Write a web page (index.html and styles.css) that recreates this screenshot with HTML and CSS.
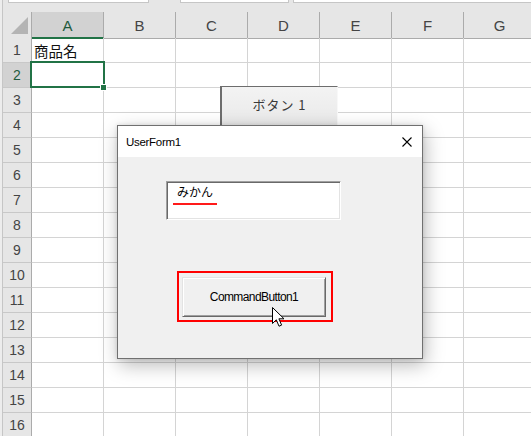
FILE: index.html
```html
<!DOCTYPE html>
<html lang="ja">
<head>
<meta charset="utf-8">
<title>Excel UserForm</title>
<link rel="stylesheet" href="styles.css">
</head>
<body>
<div class="page">
  <div class="strip"></div>
  <div class="content">
    <div class="top">
      <div class="fbar">
        <div class="fbox fbox1"></div>
        <div class="fbox fbox2"></div>
        <div class="fbox fbox3"></div>
      </div>
    </div>
    <div class="sheet">
      <div class="row hdr">
        <div class="corner"><svg width="29" height="26" viewBox="0 0 29 26"><polygon points="8,22 25,5 25,22" fill="#b4b4b4"/></svg></div>
        <div class="ch sel">A</div><div class="ch">B</div><div class="ch">C</div><div class="ch">D</div><div class="ch">E</div><div class="ch">F</div><div class="ch">G</div>
      </div>
      <div class="row"><div class="rh">1</div><div class="c"><span class="val">商品名</span></div><div class="c"></div><div class="c"></div><div class="c"></div><div class="c"></div><div class="c"></div><div class="c"></div></div>
      <div class="row"><div class="rh sel">2</div><div class="c"></div><div class="c"></div><div class="c"></div><div class="c"></div><div class="c"></div><div class="c"></div><div class="c"></div></div>
      <div class="row"><div class="rh">3</div><div class="c"></div><div class="c"></div><div class="c"></div><div class="c"></div><div class="c"></div><div class="c"></div><div class="c"></div></div>
      <div class="row"><div class="rh">4</div><div class="c"></div><div class="c"></div><div class="c"></div><div class="c"></div><div class="c"></div><div class="c"></div><div class="c"></div></div>
      <div class="row"><div class="rh">5</div><div class="c"></div><div class="c"></div><div class="c"></div><div class="c"></div><div class="c"></div><div class="c"></div><div class="c"></div></div>
      <div class="row"><div class="rh">6</div><div class="c"></div><div class="c"></div><div class="c"></div><div class="c"></div><div class="c"></div><div class="c"></div><div class="c"></div></div>
      <div class="row"><div class="rh">7</div><div class="c"></div><div class="c"></div><div class="c"></div><div class="c"></div><div class="c"></div><div class="c"></div><div class="c"></div></div>
      <div class="row"><div class="rh">8</div><div class="c"></div><div class="c"></div><div class="c"></div><div class="c"></div><div class="c"></div><div class="c"></div><div class="c"></div></div>
      <div class="row"><div class="rh">9</div><div class="c"></div><div class="c"></div><div class="c"></div><div class="c"></div><div class="c"></div><div class="c"></div><div class="c"></div></div>
      <div class="row"><div class="rh">10</div><div class="c"></div><div class="c"></div><div class="c"></div><div class="c"></div><div class="c"></div><div class="c"></div><div class="c"></div></div>
      <div class="row"><div class="rh">11</div><div class="c"></div><div class="c"></div><div class="c"></div><div class="c"></div><div class="c"></div><div class="c"></div><div class="c"></div></div>
      <div class="row"><div class="rh">12</div><div class="c"></div><div class="c"></div><div class="c"></div><div class="c"></div><div class="c"></div><div class="c"></div><div class="c"></div></div>
      <div class="row"><div class="rh">13</div><div class="c"></div><div class="c"></div><div class="c"></div><div class="c"></div><div class="c"></div><div class="c"></div><div class="c"></div></div>
      <div class="row"><div class="rh">14</div><div class="c"></div><div class="c"></div><div class="c"></div><div class="c"></div><div class="c"></div><div class="c"></div><div class="c"></div></div>
      <div class="row"><div class="rh">15</div><div class="c"></div><div class="c"></div><div class="c"></div><div class="c"></div><div class="c"></div><div class="c"></div><div class="c"></div></div>
      <div class="row"><div class="rh">16</div><div class="c"></div><div class="c"></div><div class="c"></div><div class="c"></div><div class="c"></div><div class="c"></div><div class="c"></div></div>
    </div>
  </div>
</div>

<div class="selection"><div class="handle"></div></div>

<div class="xlbutton">ボタン 1</div>

<div class="userform">
  <div class="titlebar">
    <span class="title">UserForm1</span>
    <svg class="close" width="10" height="10" viewBox="0 0 10 10"><path d="M0.5 0.5 L9.5 9.5 M9.5 0.5 L0.5 9.5" stroke="#000" stroke-width="1.1" fill="none"/></svg>
  </div>
  <div class="formbody">
    <div class="textbox">
      <div class="tbtext">みかん</div>
      <div class="redline"></div>
    </div>
    <div class="redbox">
      <div class="cmdbutton">CommandButton1</div>
    </div>
  </div>
</div>

<svg class="cursor" width="14" height="21" viewBox="0 0 14 21"><path d="M0.5 0.5 L0.5 16.5 L4.3 12.8 L7 19.2 L9.6 18.1 L6.9 11.8 L12 11.8 Z" fill="#fff" stroke="#000" stroke-width="1" stroke-linejoin="miter"/></svg>
</body>
</html>
```

FILE: styles.css
```css
* { box-sizing: border-box; }

body {
  margin: 0;
  width: 531px;
  height: 436px;
  overflow: hidden;
  background: #fff;
  font-family: "Liberation Sans", Arial, sans-serif;
  position: relative;
}

.page {
  display: flex;
  height: 100%;
}

.strip {
  width: 3px;
  flex: none;
  background: #ededed;
  border-right: 1px solid #c6c6c6;
}

.content {
  flex: 1;
  min-width: 0;
  display: flex;
  flex-direction: column;
  overflow: hidden;
}

.top {
  height: 12px;
  flex: none;
  background: #e6e6e6;
}

.fbar {
  display: flex;
  height: 3px;
  padding-left: 5px;
}

.fbox {
  height: 3px;
  background: #fff;
  border: 1px solid #c6c6c6;
  border-top: 0;
}

.fbox1 { width: 141px; margin-right: 31px; }
.fbox2 { width: 109px; margin-right: 4px; }
.fbox3 { flex: 1; border-right: 0; }

.sheet {
  display: flex;
  flex-direction: column;
}

.row {
  display: grid;
  grid-template-columns: 29px repeat(7, 72px);
  height: 25px;
  flex: none;
}

.row.hdr { height: 26px; }

.corner {
  background: #e6e6e6;
  border-right: 1px solid #ababab;
  border-bottom: 1px solid #ababab;
}

.corner svg { display: block; }

.ch {
  background: #e6e6e6;
  border-right: 1px solid #ababab;
  border-bottom: 1px solid #ababab;
  display: flex;
  align-items: center;
  justify-content: center;
  font-size: 15px;
  color: #444;
  padding-top: 1px;
}

.ch.sel {
  background: #d2d2d2;
  border-bottom: 2px solid #217346;
  color: #1f5a3d;
}

.rh {
  background: #e6e6e6;
  border-right: 1px solid #ababab;
  border-bottom: 1px solid #c8c8c8;
  display: flex;
  align-items: center;
  justify-content: center;
  font-size: 14px;
  color: #444;
}

.rh.sel {
  background: #d2d2d2;
  color: #1f5a3d;
}

.c {
  border-right: 1px solid #d4d4d4;
  border-bottom: 1px solid #d4d4d4;
  display: flex;
  align-items: center;
  padding-left: 2px;
}

.val {
  font-family: "Noto Sans CJK JP", "Liberation Sans", sans-serif;
  font-size: 14.5px;
  color: #111;
  white-space: nowrap;
}

.selection {
  position: absolute;
  left: 30px;
  top: 61px;
  width: 75px;
  height: 27px;
  border: 2px solid #217346;
}

.handle {
  position: absolute;
  left: 68px;
  top: 21px;
  width: 7px;
  height: 7px;
  background: #217346;
  border: 1px solid #fff;
}

.xlbutton {
  position: absolute;
  left: 220px;
  top: 86px;
  width: 118px;
  height: 40px;
  background: linear-gradient(#f3f3f3, #e9e9e9);
  border-top: 1px solid #6d6d6d;
  border-left: 2px solid #6d6d6d;
  border-right: 1px solid #f8f8f8;
  display: flex;
  justify-content: center;
  padding-top: 9px;
  line-height: 18px;
  font-family: "Noto Sans CJK JP", sans-serif;
  font-size: 13px;
  letter-spacing: 1px;
  color: #3a3a3a;
}

.userform {
  position: absolute;
  left: 117px;
  top: 125px;
  width: 306px;
  height: 234px;
  border: 1px solid #707070;
  background: #f0f0f0;
  display: flex;
  flex-direction: column;
  box-shadow: 2px 6px 18px rgba(0, 0, 0, 0.28), 0 0 4px rgba(0, 0, 0, 0.12);
}

.titlebar {
  height: 31px;
  flex: none;
  background: #fff;
  display: flex;
  align-items: center;
  justify-content: space-between;
  padding: 0 10px 0 8px;
}

.title {
  font-size: 11.5px;
  letter-spacing: -0.3px;
  color: #000;
}

.close { display: block; }

.formbody {
  flex: 1;
  padding: 24px 0 0 48px;
  display: flex;
  flex-direction: column;
  align-items: flex-start;
}

.textbox {
  width: 175px;
  height: 39px;
  background: #fff;
  border: 1px solid;
  border-color: #a0a0a0 #fff #fff #a0a0a0;
  box-shadow: inset 1px 1px #696969, inset -1px -1px #e3e3e3;
  padding: 4px 0 0 10px;
}

.tbtext {
  font-family: "Noto Sans CJK JP", sans-serif;
  font-size: 12px;
  line-height: 12px;
  color: #000;
}

.redline {
  margin: 5px 0 0 -4px;
  width: 44px;
  height: 2px;
  background: #ff1a1a;
}

.redbox {
  margin: 51px 0 0 11px;
  border: 2px solid #ff0000;
  padding: 4px 5px 3px 3px;
}

.cmdbutton {
  width: 144px;
  height: 40px;
  background: #f0f0f0;
  border: 1px solid;
  border-color: #e3e3e3 #696969 #696969 #e3e3e3;
  box-shadow: inset 1px 1px #fff, inset -1px -1px #a0a0a0;
  display: flex;
  align-items: center;
  justify-content: center;
  font-size: 12px;
  letter-spacing: -0.6px;
  color: #000;
}

.cursor {
  position: absolute;
  left: 272px;
  top: 307px;
}
```
